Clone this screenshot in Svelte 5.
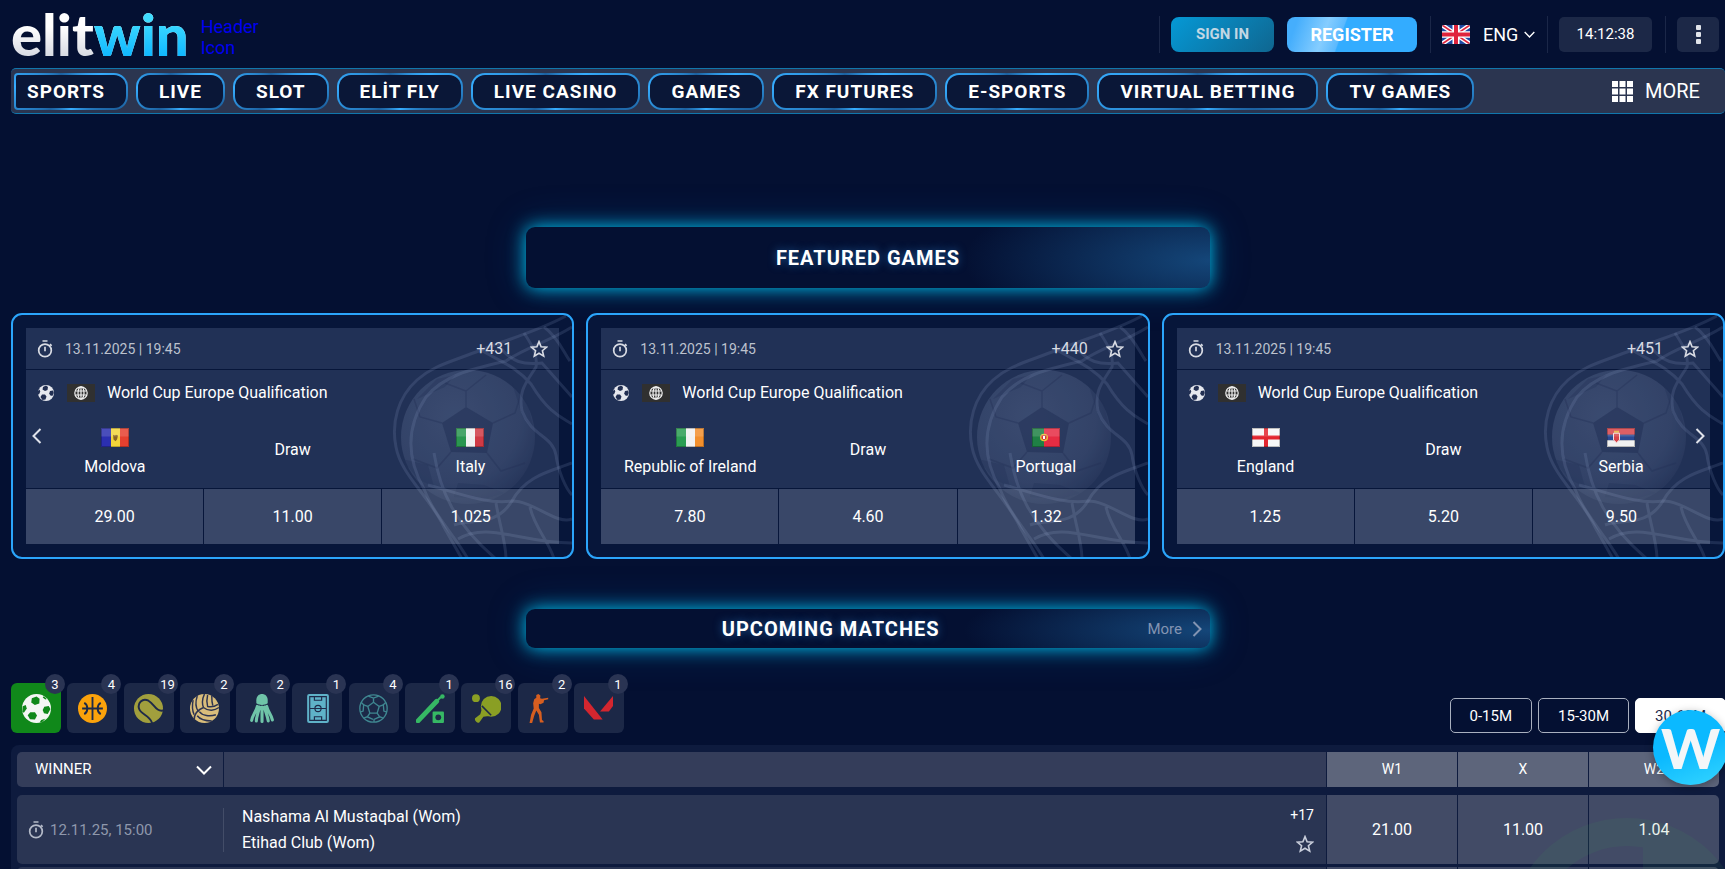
<script>
	const navItems = [
		'SPORTS',
		'LIVE',
		'SLOT',
		'ELİT FLY',
		'LIVE CASINO',
		'GAMES',
		'FX FUTURES',
		'E-SPORTS',
		'VIRTUAL BETTING',
		'TV GAMES'
	];

	const featured = [
		{
			date: '13.11.2025 | 19:45',
			more: '+431',
			home: 'Moldova',
			homeFlag: 'md',
			away: 'Italy',
			awayFlag: 'it',
			odds: ['29.00', '11.00', '1.025']
		},
		{
			date: '13.11.2025 | 19:45',
			more: '+440',
			home: 'Republic of Ireland',
			homeFlag: 'ie',
			away: 'Portugal',
			awayFlag: 'pt',
			odds: ['7.80', '4.60', '1.32']
		},
		{
			date: '13.11.2025 | 19:45',
			more: '+451',
			home: 'England',
			homeFlag: 'en',
			away: 'Serbia',
			awayFlag: 'rs',
			odds: ['1.25', '5.20', '9.50']
		}
	];

	const sports = [
		{ id: 'soccer', count: 3 },
		{ id: 'basketball', count: 4 },
		{ id: 'tennis', count: 19 },
		{ id: 'volleyball', count: 2 },
		{ id: 'badminton', count: 2 },
		{ id: 'esoccer', count: 1 },
		{ id: 'futsal', count: 4 },
		{ id: 'cricket', count: 1 },
		{ id: 'tabletennis', count: 16 },
		{ id: 'cs', count: 2 },
		{ id: 'valorant', count: 1 }
	];

	const ranges = ['0-15M', '15-30M', '30-60M'];

	let activeSport = 'soccer';
	let activeRange = '30-60M';
</script>

{#snippet stopwatch()}
	<svg class="stopwatch" viewBox="0 0 16 18" aria-hidden="true">
		<g fill="none" stroke="currentColor" stroke-width="1.7">
			<circle cx="8" cy="10.4" r="6.3" />
			<path d="M5.5 1h5M8 6.8v4.4M13 4.2l1.6 1.6" />
		</g>
	</svg>
{/snippet}

{#snippet star()}
	<svg class="star" viewBox="0 0 18 18" aria-hidden="true">
		<path
			d="M9 1.6l2.1 5.1 5.5.4-4.2 3.6 1.3 5.4L9 13.2l-4.7 2.9 1.3-5.4L1.4 7.1l5.5-.4z"
			fill="none"
			stroke="currentColor"
			stroke-width="1.6"
		/>
	</svg>
{/snippet}

{#snippet chevron()}
	<svg class="chevron" viewBox="0 0 10 16" aria-hidden="true">
		<path d="M1.5 1l7 7-7 7" fill="none" stroke="currentColor" stroke-width="2" />
	</svg>
{/snippet}

{#snippet flag(code)}
	<svg class="flag" viewBox="0 0 28 20" preserveAspectRatio="none" aria-hidden="true">
		{#if code === 'md'}
			<path fill="#2b2fb0" d="M0 0h10v20H0z" />
			<path fill="#f3d43a" d="M10 0h9v20h-9z" />
			<path fill="#e5402f" d="M19 0h9v20h-9z" />
			<path fill="#8a6422" d="M12 7l2 1 1-1 2 1-1 4-1.5 2L12.5 12z" />
		{:else if code === 'it'}
			<path fill="#2a9650" d="M0 0h10v20H0z" />
			<path fill="#f1f1f1" d="M10 0h9v20h-9z" />
			<path fill="#cf3a45" d="M19 0h9v20h-9z" />
		{:else if code === 'ie'}
			<path fill="#2a9d52" d="M0 0h10v20H0z" />
			<path fill="#f1f1f1" d="M10 0h9v20h-9z" />
			<path fill="#f28f2d" d="M19 0h9v20h-9z" />
		{:else if code === 'pt'}
			<path fill="#1f8045" d="M0 0h12v20H0z" />
			<path fill="#e62c43" d="M12 0h16v20H12z" />
			<circle cx="12" cy="10" r="4" fill="#e8c33a" />
			<path fill="#d2303c" d="M9.5 7.5h5v3.5l-2.5 2-2.5-2z" />
			<path fill="#fff" d="M11 8.5h2v3h-2z" />
		{:else if code === 'en'}
			<path fill="#f7f7f7" d="M0 0h28v20H0z" />
			<path fill="#e3262f" d="M12 0h4v20h-4zM0 8h28v4H0z" />
		{:else if code === 'rs'}
			<path fill="#d8434a" d="M0 0h28v7H0z" />
			<path fill="#2c4a94" d="M0 7h28v6H0z" />
			<path fill="#f1f1f1" d="M0 13h28v7H0z" />
			<path fill="#e9b43a" d="M7 3h5v2H7z" />
			<path fill="#d8434a" stroke="#f4e4e4" d="M6.5 5.5h6v7l-3 3-3-3z" />
		{:else if code === 'gb'}
			<path fill="#1e4aa3" d="M0 0h28v20H0z" />
			<path stroke="#fff" stroke-width="4.5" d="M0 0l28 20M28 0L0 20" />
			<path stroke="#e0243c" stroke-width="1.8" d="M0 0l28 20M28 0L0 20" />
			<path fill="#fff" d="M10.5 0h7v20h-7zM0 6.5h28v7H0z" />
			<path fill="#e0243c" d="M12 0h4v20h-4zM0 8h28v4H0z" />
		{/if}
		{#if code !== 'gb'}
			<path fill="#fff" opacity="0.15" d="M0 0h28v9H0z" />
			<path fill="none" stroke="#000" opacity="0.25" d="M.5.5h27v19H.5z" />
		{/if}
	</svg>
{/snippet}

{#snippet sportIcon(id)}
	<svg class="sport-icon" viewBox="0 0 28 28" aria-hidden="true">
		{#if id === 'soccer'}
			<circle cx="14" cy="14" r="14" fill="#f4f6f4" />
			<g fill="#10881a">
				<path d="M9.5 4L14 2.4l3 2.2-.3 4.6-4.3 1.5-3.5-2.5z" />
				<path d="M21.5 12.3l4.3-.6 1.7 2.8-2.7 4.8-3.6-.8-1.2-3z" />
				<path d="M8 17.5l4.5.2 2 3-2 4-4.8-.3-2.2-4z" />
				<path d="M.6 11.8l3-1.3 1 3.6-2.8 4-1.5-1z" />
				<path d="M21 2.2l3 2.600-1.500.4L20 3.400zM18.500 25l4-1-3 3-2.500.6z" />
			</g>
		{:else if id === 'basketball'}
			<circle cx="14" cy="14" r="14" fill="#fba20b" />
			<g fill="none" stroke="#1e2a49" stroke-width="1.8">
				<path d="M14 3v22M4 14h20M6 8.500c4 2 4 9 0 11M22 8.500c-4 2-4 9 0 11" />
			</g>
		{:else if id === 'tennis'}
			<circle cx="14" cy="14" r="14" fill="#a19f3d" />
			<path
				d="M28 16c-7 1-8-6-14-9.500C8 3.500 3 9 5 14.500c2 5.500 10 6 12.500 13.500"
				fill="none"
				stroke="#1e2a49"
				stroke-width="1.9"
			/>
		{:else if id === 'volleyball'}
			<circle cx="14" cy="14" r="14" fill="#d9bd7b" />
			<g fill="none" stroke="#2c3350" stroke-width="1.4">
				<path d="M13 13C11 8 12 4 14 0M13 13c5 4 11 3 15 0M13 13c-5 2-9 6-9 12" />
				<path d="M7 2C5 8 6 14 8 17M3 6c-1 5-1 10 1 14" />
				<path d="M17 1c-1 4-1 7 0 11c4 1 7 0 10-2M21 2c0 3 0 6 1 9" />
				<path d="M9 17c3 4 10 5 16 3M7 21c3 4 9 5 14 5" />
			</g>
		{:else if id === 'badminton'}
			<path d="M9 9V6c0-8 11-8 11 0v3c-3 2-8 2-11 0z" fill="#6fc4a8" />
			<g fill="none" stroke="#6fc4a8" stroke-width="3" stroke-linecap="round">
				<path d="M10 12c-1.500 6-5 9-5.500 13.500M12 12.500C11 18 9 22 9 26M14.500 12.500V26.500M17 12.500c1 6 3 9 3.500 13.500M19 12c1.500 6 4.500 8 5.500 13" />
			</g>
		{:else if id === 'esoccer'}
			<rect x="4" y="0" width="21" height="28" rx="2" fill="#5fb2c8" />
			<g fill="none" stroke="#1e2a49" stroke-width="1.1">
				<path d="M6.500 2.500h16v23h-16zM7 14h15M11 3v3h7V3M11 25v-3h7v3" />
				<circle cx="14.5" cy="14" r="3" />
			</g>
		{:else if id === 'futsal'}
			<g fill="none" stroke="#3f8791" stroke-width="1.3">
				<circle cx="14" cy="14" r="13.2" />
				<path d="M14 8l5.500 4-2 6.500h-7L8.500 12z" />
				<path d="M14 8V4M19.500 12l4-1.500M17.500 18.500L20 22M10.500 18.500L8 22M8.500 12l-4-1.500" />
				<path d="M9 2l5 2 5-2M26 8l-2.500 2.500.5 6 3 1M23 23l-3-1-5.500 2.500V27M5 23l3-1 5.500 2.500M2 8l2.500 2.500-.5 6-3 1" />
			</g>
		{:else if id === 'cricket'}
			<path d="M2 26L20 7" stroke="#36b864" stroke-width="4.6" stroke-linecap="round" />
			<path d="M20 7l4-4" stroke="#36b864" stroke-width="2" />
			<circle cx="25.5" cy="2.5" r="2.2" fill="#36b864" />
			<rect x="16" y="17" width="11" height="11" rx="1" fill="#36b864" />
			<circle cx="21.5" cy="22.5" r="2.8" fill="#1e2a49" />
		{:else if id === 'tabletennis'}
			<g fill="#8a9f24">
				<circle cx="3.8" cy="4" r="3.8" />
				<circle cx="18.5" cy="12" r="10" />
				<path d="M10 13l8 8-7 1-4 5.500c-2 1-5-2-4-4l5-4z" />
			</g>
			<path d="M9.500 11.500l9 9" stroke="#1e2a49" stroke-width="1.5" />
		{:else if id === 'cs'}
			<path
				fill="#d65e20"
				d="M8 1l2-1 2 1.500-.3 2.500 1.800.5 6-1v1.500l-4 1-.5 2.500-3 1.500-1.500-.5v4l2.500 4 .5 7.500 1.500 1v1.500h-3.500l-1-7.500-2.500-4-2 5-2 7H1.500l1.500-8 2.500-6-.5-5 1-4 2-1.500z"
			/>
		{:else}
			<path d="M0 2l18 22.500H9.500L0 14z" fill="#d3262f" />
			<path d="M28 2v9.500L24 17h-8.500z" fill="#d3262f" />
		{/if}
	</svg>
{/snippet}

<div class="page">
	<header class="top">
		<a class="logo" href="/" aria-label="elitwin">elit<span>win</span></a>
		<a class="header-icon" href="/promo">Header<br />Icon</a>

		<div class="account">
			<button class="sign-in">SIGN IN</button>
			<button class="register">REGISTER</button>
		</div>
		<label class="language">
			{@render flag('gb')}
			<select aria-label="Language">
				<option>ENG</option>
			</select>
			{@render chevron()}
		</label>
		<div class="clock">
			<time>14:12:38</time>
		</div>
		<div class="options">
			<button aria-label="Options"><i></i><i></i><i></i></button>
		</div>
	</header>

	<nav>
		{#each navItems as item}
			<a href="/{item.toLowerCase()}">{item}</a>
		{/each}
		<button class="nav-more">
			<svg viewBox="0 0 21 21" aria-hidden="true">
				<path
					fill="currentColor"
					d="M0 0h6v6H0zM7.500 0h6v6h-6zM15 0h6v6h-6zM0 7.500h6v6H0zM7.500 7.500h6v6h-6zM15 7.500h6v6h-6zM0 15h6v6H0zM7.500 15h6v6h-6zM15 15h6v6h-6z"
				/>
			</svg>
			MORE
		</button>
	</nav>

	<main>
		<div class="banner featured-banner">
			<h2>FEATURED GAMES</h2>
		</div>

		<section class="cards">
			<button class="slide prev" aria-label="Previous">{@render chevron()}</button>
			{#each featured as game}
				<article class="card">
					<svg class="net" viewBox="0 0 200 246" aria-hidden="true">
						<defs>
							<radialGradient id="ball-shade" cx="0.4" cy="0.35" r="0.7">
								<stop offset="0" stop-color="#8fa3c8" stop-opacity="0.22" />
								<stop offset="0.7" stop-color="#8fa3c8" stop-opacity="0.15" />
								<stop offset="1" stop-color="#8fa3c8" stop-opacity="0.04" />
							</radialGradient>
						</defs>
						<circle cx="94" cy="124" r="67" fill="url(#ball-shade)" />
						<path d="M92 94l27 16-6 30-36-1-9-29z" fill="#0a173c" opacity="0.6" />
						<path
							d="M43 86l20-20 18-4-10 12zM28 146l16 20 16 8-6-22zM138 70l16 22 6 26-12-16zM80 184l30 2 20-6-20-8-26-2z"
							fill="#0a173c"
							opacity="0.35"
						/>
						<g fill="none" stroke="#0a173c" stroke-width="1.5" opacity="0.4">
							<path d="M92 94V78L71 70M92 78l20-16M119 110l22-10 7-22M113 140l14 18 24-8M77 139l-14 16-24-9M68 110l-22-6-6-18" />
						</g>
						<g fill="none" stroke="#8fa3c8" stroke-opacity="0.17" stroke-width="3">
							<path d="M192 3c-30 16-55 22-85 34S60 52 43 67C24 84 17 110 22 134c5 28 34 50 48 80l18 32" />
							<path d="M198 14c-26 16-46 20-66 34-34 8-62 14-80 36-20 30-20 60-2 92 10 26 30 46 44 70" />
							<path d="M107 37c20 12 34 16 50 34 18 30 32 34 41 40M124 32c14 18 26 20 44 18l30 34M150 20c8 12 14 22 12 34-10 16-18 24-14 44" />
							<path d="M170 14c14 10 20 26 26 34M148 98c10 26 30 24 34 44 2 16 10 34 16 40M60 140c6 38 20 70 62 106M54 172c30 8 60 20 84 16 22 0 44 24 60 18" />
							<path d="M198 150c-20 8-46 12-60 38-16 26-40 18-58 24M122 190c4 24 10 40 10 56M156 194c4 20 20 36 24 52M84 226c30-18 62 4 114 4" />
						</g>
					</svg>
					<div class="card-head">
						{@render stopwatch()}
						<time>{game.date}</time>
						<a class="count" href="/match">{game.more}</a>
						<button class="icon-button" aria-label="Add to favourites">{@render star()}</button>
					</div>
					<div class="card-body">
						<div class="league">
							<svg class="ball" viewBox="0 0 16 16" aria-hidden="true">
								<circle cx="8" cy="8" r="8" fill="#e6e8ee" />
								<g fill="#222f52">
									<path d="M5 2l3-1.500L10 2l-.5 3L7 6 4.500 4.500z" />
									<path d="M12 6l3-.5.8 2.500-1.500 3-2.300-.8-.7-2z" />
									<path d="M4 9.500h3l1.500 2-1 3-3 .5L2.500 12zM0 6l1.500-1.500.8 2L1 9.500 0 9z" />
								</g>
							</svg>
							<span class="globe">
								<svg viewBox="0 0 14 14" aria-hidden="true">
									<g fill="none" stroke="#f2f2f2" stroke-width="1.2">
										<circle cx="7" cy="7" r="6.2" />
										<ellipse cx="7" cy="7" rx="3" ry="6.2" />
										<path d="M7 1v12M1.500 5h11M1.500 9h11" />
									</g>
								</svg>
							</span>
							World Cup Europe Qualification
						</div>
						<div class="teams">
							<div class="team">{@render flag(game.homeFlag)}<span>{game.home}</span></div>
							<div><span>Draw</span></div>
							<div class="team">{@render flag(game.awayFlag)}<span>{game.away}</span></div>
						</div>
					</div>
					<div class="odds">
						{#each game.odds as odd}
							<button>{odd}</button>
						{/each}
					</div>
				</article>
			{/each}
			<button class="slide next" aria-label="Next">{@render chevron()}</button>
		</section>

		<div class="banner upcoming-banner">
			<h2>UPCOMING MATCHES</h2>
			<a href="/upcoming">More {@render chevron()}</a>
		</div>

		<div class="filters">
			<div class="sports">
				{#each sports as sport}
					<button
						class:active={activeSport === sport.id}
						aria-label={sport.id}
						on:click={() => (activeSport = sport.id)}
					>
						{@render sportIcon(sport.id)}
						<span class="badge">{sport.count}</span>
					</button>
				{/each}
			</div>
			<div class="ranges">
				{#each ranges as range}
					<button class:active={activeRange === range} on:click={() => (activeRange = range)}>
						{range}
					</button>
				{/each}
			</div>
		</div>

		<div class="table-wrap">
			<svg class="watermark" viewBox="0 0 240 240" aria-hidden="true">
				<circle cx="120" cy="120" r="105" fill="none" stroke="#3f9a55" stroke-width="28" />
				<path d="M136 24v60l60 20 26-40z" fill="#3f9a55" />
			</svg>
			<table>
				<thead>
					<tr>
						<th>
							<label class="market">
								<select aria-label="Market">
									<option>WINNER</option>
								</select>
								{@render chevron()}
							</label>
						</th>
						<th></th>
						<th class="odd-head">W1</th>
						<th class="odd-head">X</th>
						<th class="odd-head">W2</th>
					</tr>
				</thead>
				<tbody>
					<tr>
						<td class="date">{@render stopwatch()} 12.11.25, 15:00</td>
						<td class="match">
							<div class="names">
								<span>Nashama Al Mustaqbal (Wom)</span>
								<span>Etihad Club (Wom)</span>
							</div>
							<div class="extras">
								<a href="/match">+17</a>
								<button class="icon-button" aria-label="Add to favourites">{@render star()}</button>
							</div>
						</td>
						<td class="odd"><button>21.00</button></td>
						<td class="odd"><button>11.00</button></td>
						<td class="odd"><button>1.04</button></td>
					</tr>
					<tr>
						<td class="date"></td>
						<td class="match"></td>
						<td class="odd"></td>
						<td class="odd"></td>
						<td class="odd"></td>
					</tr>
				</tbody>
			</table>
		</div>
	</main>

	<button class="launcher" aria-label="Open chat">W</button>
</div>

<style>
	:global(body) {
		background: #041032;
	}

	.page {
		box-sizing: border-box;
		height: 100vh;
		padding-left: 11px;
		overflow: hidden;
		background: #041032;
		color: #fff;
		font-family: Roboto, sans-serif;
		font-size: 16px;
	}

	.page :global(*) {
		box-sizing: border-box;
	}

	button,
	select {
		margin: 0;
		padding: 0;
		border: 0;
		background: none;
		color: inherit;
		font: inherit;
		cursor: pointer;
	}

	select {
		appearance: none;
		outline: none;
	}

	a {
		color: inherit;
		text-decoration: none;
	}

	svg {
		display: block;
		flex: none;
	}

	.chevron {
		width: 10px;
		height: 16px;
	}

	.stopwatch {
		width: 16px;
		height: 18px;
	}

	.star {
		width: 18px;
		height: 18px;
	}

	.flag {
		width: 28px;
		height: 19px;
	}

	/* Top bar */
	.top {
		display: flex;
		align-items: center;
		height: 68px;
		padding-right: 6px;
	}

	.logo {
		font-family: Lato, sans-serif;
		font-size: 58px;
		font-weight: 900;
		line-height: 70px;
		background: linear-gradient(#fff 40%, #d9dce4 80%);
		background-clip: text;
		color: transparent;
	}

	.logo span {
		background: linear-gradient(#3fdcff 30%, #12b9ff 80%);
		background-clip: text;
	}

	.header-icon {
		margin: 6px auto 0 12px;
		color: #0000ee;
		font-size: 18px;
		line-height: 21px;
	}

	.account,
	.language,
	.clock,
	.options {
		display: flex;
		align-items: center;
		height: 37px;
		border-left: 1px solid #1b2748;
	}

	.account {
		gap: 13px;
		padding: 0 13px 0 11px;
	}

	.sign-in,
	.register {
		height: 35px;
		border-radius: 8px;
	}

	.sign-in {
		width: 103px;
		background: linear-gradient(135deg, #0599d6, #0f6690);
		color: #c2d7e4;
		font-size: 15px;
		font-weight: 700;
	}

	.register {
		width: 130px;
		background: linear-gradient(110deg, #45aefc 8%, #85cdff 30%, #5bb9fe 42%, #33acff 43%);
		font-size: 18px;
		font-weight: 700;
	}

	.language {
		padding: 0 12px 0 11px;
		font-size: 18px;
	}

	.language select {
		padding: 0 5px 0 13px;
	}

	.language .chevron {
		width: 7px;
		height: 11px;
		margin: 0 2px;
		transform: rotate(90deg);
	}

	.language .flag {
		border-radius: 2px;
	}

	.clock {
		padding: 0 13px 0 11px;
	}

	.clock time {
		width: 93px;
		border-radius: 5px;
		background: #1c2847;
		font-size: 15px;
		line-height: 35px;
		text-align: center;
	}

	.options {
		padding-left: 11px;
	}

	.options button {
		display: flex;
		flex-direction: column;
		align-items: center;
		justify-content: center;
		gap: 2px;
		width: 42px;
		height: 35px;
		border-radius: 5px;
		background: #1c2847;
	}

	.options i {
		width: 5px;
		height: 5px;
		border-radius: 1px;
		background: #e1e4ea;
	}

	/* Main menu */
	nav {
		display: flex;
		align-items: center;
		gap: 8px;
		height: 46px;
		padding: 0 25px 0 3px;
		border: solid #1177ad;
		border-width: 1px 0;
		border-radius: 5px;
		background: #2b3550;
		font-size: 20px;
		white-space: nowrap;
	}

	nav a {
		height: 37px;
		padding: 0 21px;
		border: 2px solid transparent;
		border-radius: 14px;
		background:
			linear-gradient(#0a1737, #0a1737) padding-box,
			conic-gradient(from 60deg, #36adff, #1c61a0 50deg, #36adff 120deg, #1c61a0 170deg, #36adff 215deg, #1c61a0 270deg, #36adff) border-box;
		font-size: 19px;
		font-weight: 700;
		letter-spacing: 1px;
		line-height: 34px;
	}

	nav a:first-child {
		padding-left: 11px;
		border-radius: 4px 14px 14px 4px;
	}

	.nav-more {
		display: flex;
		align-items: center;
		gap: 12px;
		margin-left: auto;
	}

	.nav-more svg {
		width: 21px;
		height: 21px;
	}

	/* Section banners */
	.banner {
		display: flex;
		align-items: center;
		width: 684px;
		max-width: 100%;
		margin: 0 auto;
		border-radius: 9px;
		background:
			radial-gradient(ellipse 36% 130% at 100% 55%, #144679, transparent),
			#041032;
		box-shadow:
			0 0 18px #00c4ee,
			0 0 40px rgba(0, 110, 200, 0.25);
	}

	.banner h2 {
		flex: 1;
		margin: 0;
		font-size: 20px;
		font-weight: 700;
		letter-spacing: 1px;
		text-align: center;
		text-shadow: 0 0 8px #1f5c9c;
	}

	.featured-banner {
		height: 61px;
		margin-top: 113px;
	}

	.upcoming-banner {
		height: 39px;
		margin-top: 50px;
	}

	.banner a {
		display: flex;
		align-items: center;
		gap: 10px;
		padding: 0 8px 0 12px;
		color: #8394b2;
		font-size: 15px;
	}

	/* Featured games */
	.cards {
		position: relative;
		display: grid;
		grid-template-columns: repeat(3, 1fr);
		gap: 12px;
		margin-top: 25px;
	}

	.card {
		position: relative;
		padding: 13px;
		border: 2px solid #2ba5fb;
		border-radius: 11px;
		background: #07163a;
		overflow: hidden;
	}

	/* Net artwork shows through the translucent panels */
	.net {
		position: absolute;
		top: -2px;
		right: -2px;
		width: 200px;
		height: 246px;
	}

	.card-head,
	.card-body,
	.odds {
		position: relative;
	}

	.card-head {
		display: flex;
		align-items: center;
		height: 41px;
		padding: 0 11px;
		background: rgba(168, 184, 225, 0.17);
		color: #d8dbe3;
	}

	.card-head time {
		margin: 0 auto 0 12px;
		color: #bcc2ce;
		font-size: 14px;
	}

	.icon-button {
		display: block;
	}

	.count {
		margin-right: 18px;
	}

	.card-body {
		height: 118px;
		margin: 1px 0;
		background: rgba(168, 184, 225, 0.17);
	}

	.league {
		display: flex;
		align-items: center;
		height: 45px;
		padding-left: 12px;
	}

	.ball {
		width: 16px;
		height: 16px;
	}

	.globe {
		display: flex;
		align-items: center;
		justify-content: center;
		width: 28px;
		height: 18px;
		margin: 0 12px 0 13px;
		background: #303030;
	}

	.globe svg {
		width: 14px;
		height: 14px;
	}

	.teams {
		display: grid;
		grid-template-columns: repeat(3, 1fr);
		height: 68px;
	}

	.teams div {
		display: flex;
		flex-direction: column;
		align-items: center;
		justify-content: center;
		gap: 10px;
	}

	.teams .team {
		padding-top: 6px;
	}

	.odds {
		display: grid;
		grid-template-columns: repeat(3, 1fr);
		gap: 1px;
	}

	.odds button {
		height: 55px;
		background: rgba(200, 211, 235, 0.26);
	}

	.slide {
		position: absolute;
		top: 50%;
		z-index: 1;
		padding: 4px;
		color: #dfe2ea;
		transform: translateY(-50%);
	}

	.prev {
		left: 17px;
	}

	.prev .chevron {
		transform: scaleX(-1);
	}

	.next {
		right: 16px;
	}

	/* Sport and time filters */
	.filters {
		display: flex;
		align-items: flex-end;
		justify-content: space-between;
		margin-top: 35px;
	}

	.sports {
		display: flex;
		justify-content: space-between;
		width: 613px;
	}

	.sports button {
		position: relative;
		display: flex;
		align-items: center;
		justify-content: center;
		width: 50px;
		height: 50px;
		border-radius: 6px;
		background: #1c2847;
	}

	.sports button.active {
		background: #10881a;
	}

	.sport-icon {
		width: 29px;
		height: 29px;
	}

	.badge {
		position: absolute;
		top: -9px;
		right: -4px;
		width: 20px;
		height: 20px;
		border-radius: 50%;
		background: #2a3453;
		font-size: 13px;
		line-height: 21px;
		text-align: center;
	}

	.ranges {
		display: flex;
		gap: 6px;
		margin-right: -1px;
	}

	.ranges button {
		height: 35px;
		padding: 0 19px;
		border: 1px solid #a9b0bf;
		border-radius: 5px;
		font-size: 15px;
	}

	.ranges button.active {
		border-color: #fff;
		background: #fff;
		color: #1d2a4c;
	}

	/* Odds table */
	.table-wrap {
		position: relative;
		margin-top: 12px;
		padding: 7px 6px;
		border-radius: 8px;
		background: #0e1b3e;
		overflow: hidden;
	}

	.watermark {
		position: absolute;
		top: 72px;
		right: -22px;
		z-index: 1;
		width: 240px;
		height: 240px;
		opacity: 0.1;
		pointer-events: none;
	}

	table,
	thead,
	tbody {
		display: block;
	}

	tr {
		display: grid;
		grid-template-columns: 206px 1fr 130px 130px 130px;
		gap: 1px;
	}

	th,
	td {
		padding: 0;
	}

	th {
		height: 35px;
		background: #343d5a;
		font-size: 14px;
		font-weight: 400;
		line-height: 35px;
	}

	th:first-child,
	td:first-child {
		border-radius: 5px 0 0 5px;
	}

	th:last-child,
	td:last-child {
		border-radius: 0 5px 5px 0;
	}

	.odd-head {
		background: #5d657b;
	}

	.market {
		display: flex;
		align-items: center;
		height: 35px;
		padding: 0 14px 0 18px;
		font-size: 15px;
	}

	.market select {
		flex: 1;
	}

	.market .chevron {
		transform: rotate(90deg);
	}

	tbody {
		padding-top: 8px;
	}

	tbody tr {
		margin-bottom: 3px;
	}

	td {
		height: 69px;
	}

	.date,
	.match {
		display: flex;
		align-items: center;
		background: #2a3553;
	}

	.date {
		gap: 6px;
		padding-left: 11px;
		color: #8f98ac;
		font-size: 15px;
	}

	.date .stopwatch {
		color: #b4bac8;
	}

	.match {
		justify-content: space-between;
		margin-left: -1px;
		padding-right: 12px;
	}

	.names {
		display: flex;
		flex-direction: column;
		justify-content: center;
		height: 44px;
		padding-left: 18px;
		border-left: 1px solid #434d68;
		line-height: 26px;
	}

	.extras {
		display: flex;
		flex-direction: column;
		align-items: flex-end;
		gap: 12px;
		font-size: 14px;
	}

	.extras .star {
		color: #c9cedb;
	}

	.odd {
		background: #424b66;
	}

	.odd button {
		width: 100%;
		height: 100%;
	}

	.launcher {
		position: fixed;
		right: -3px;
		bottom: 84px;
		z-index: 2;
		width: 75px;
		height: 75px;
		border-radius: 50%;
		background: linear-gradient(160deg, #0bb9ff 50%, #35d6ff);
		box-shadow: 0 2px 8px rgba(0, 0, 0, 0.3);
		color: #f4f6f8;
		font-family: Lato, sans-serif;
		font-size: 56px;
		font-weight: 900;
		line-height: 75px;
		text-align: center;
	}
</style>
